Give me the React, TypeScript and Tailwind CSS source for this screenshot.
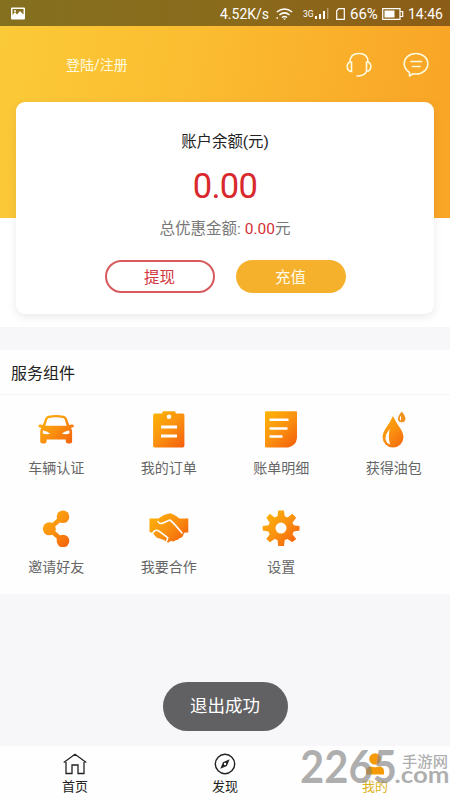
import React from "react";

const Defs = () => (
  <svg width="0" height="0" className="absolute">
    <defs>
      <linearGradient id="fire" gradientUnits="userSpaceOnUse" x1="3" y1="3" x2="35" y2="35">
        <stop offset="0" stopColor="#fdb405" />
        <stop offset="0.5" stopColor="#fa9210" />
        <stop offset="1" stopColor="#f4600c" />
      </linearGradient>
    </defs>
  </svg>
);

const G = "url(#fire)";

const Car = () => (
  <svg width="38" height="38" viewBox="0 0 38 38">
    <path
      fill={G}
      fillRule="evenodd"
      d="M11.500 5.700 Q19 4.100 26.500 5.700 Q29 6.200 29.900 8.500 L32.200 15 Q34 14.300 36.300 14.800 Q37.600 16 36.300 17.200 L34 17.800 Q35.300 20 35.100 23 V31.500 Q35 33.600 33 33.600 H31 Q29 33.600 28.800 31.500 V29.500 H9.600 V31.500 Q9.400 33.600 7.400 33.600 H5.400 Q3.200 33.600 3.200 31.500 V23 Q3 20 4.200 17.800 L2 17.200 Q.700 16 2 14.800 Q4 14.300 5.800 15 L8.300 8.500 Q9 6.200 11.500 5.700Z M12 8 Q10.700 8.300 10.200 9.700 L8.300 15.800 H29.700 L27.800 9.700 Q27.300 8.300 26 8 Q19 6.700 12 8Z M6 20.500 Q5.300 22.600 6.200 23.700 Q9 24.600 13.300 23.800 Q11 21.300 6 20.500Z M32.200 20.500 Q33 22.600 32 23.700 Q29.200 24.600 24.900 23.800 Q27 21.300 32.200 20.500Z"
    />
  </svg>
);

const Clipboard = () => (
  <svg width="38" height="38" viewBox="0 0 38 38">
    <path
      fill={G}
      fillRule="evenodd"
      d="M4.900 3.500 H12 L13 1.300 H25 L26 3.500 H32.800 Q34.400 3.500 34.400 5.300 V35.700 Q34.400 37.500 32.600 37.500 H4.900 Q3.100 37.500 3.100 35.700 V5.300 Q3.100 3.500 4.900 3.500Z M19 4.500 A2.300 2.300 0 1 0 19 9.100 A2.300 2.300 0 1 0 19 4.500Z M11 15.500 V18.400 H27 V15.500Z M11 24.500 V27.400 H27 V24.500Z"
    />
  </svg>
);

const Bill = () => (
  <svg width="38" height="38" viewBox="0 0 38 38">
    <path fill={G} d="M4.500 1.300 H34 Q35 1.300 35 2.300 V28 Q34 36 26 37.500 H4.500 Q3 37.500 3 36 V2.300 Q3 1.300 4.500 1.300Z" />
    <path stroke="white" strokeWidth="2.500" d="M7.500 9.800H26.500M7.500 18.500H25.500M7.500 26.500H20.500" />
  </svg>
);

const Drop = () => (
  <svg width="38" height="38" viewBox="0 0 38 38">
    <path fill={G} d="M18 6 Q21 12.500 26 19.500 Q28.500 23.500 28.500 27 A10.500 10.500 0 0 1 7.500 27 Q7.500 23.500 10 19.500 Q15 12.500 18 6Z" />
    <path fill="white" d="M14.700 19 Q9 26 10.800 30.500 Q12 33.700 15.200 34.700 Q12.800 27.500 14.700 19Z" />
    <path fill="#ef8f1c" d="M26.700 1.500 Q30.700 6.500 30.400 8.800 A3.700 3.500 0 0 1 23 8.800 Q22.900 6.500 26.700 1.500Z" />
    <path fill="white" d="M25.900 5.500 Q23.800 8.500 25.700 11 Q26.500 8.500 25.900 5.500Z" />
  </svg>
);

const Share = () => (
  <svg width="38" height="38" viewBox="0 0 38 38">
    <g fill={G}>
      <circle cx="26" cy="7.700" r="6.300" />
      <circle cx="12.300" cy="19.800" r="6.500" />
      <circle cx="26" cy="32" r="6.300" />
    </g>
    <path stroke={G} strokeWidth="4.600" fill="none" d="M26 7.700L12 19.800L26 32" />
  </svg>
);

const Handshake = () => (
  <svg width="40" height="38" viewBox="0 0 40 38">
    <path
      fill={G}
      d="M.500 9.500 H9.500 Q12 7.500 15 6 L21 4.200 Q24 4.500 30.500 9.500 H39.300 V23.500 H35.800 Q34 25 34 27 Q32.500 29.500 30.500 29 Q29.500 31.500 27 31 Q24.500 33.500 22 31.800 L19.300 33.800 Q17 33 15 31 L7.500 28.500 L3.700 24 L.500 23Z"
    />
    <path fill="none" stroke="white" strokeWidth="1.600" strokeLinecap="round" strokeLinejoin="round" d="M9 12.500 Q10.500 15.600 14 14 Q17.500 12.300 20.800 11 Q24 13 33 24" />
    <path fill="none" stroke="white" strokeWidth="1.600" strokeLinecap="round" d="M3.300 24.800 Q6 19.500 10 22.200 L18.700 28.700 Q18.500 31 16.500 34" />
  </svg>
);

const Gear = () => (
  <svg width="38" height="38" viewBox="0 0 38 38">
    <path
      fill={G}
      fillRule="evenodd"
      d="M16.200 1.500 H22 L22.700 7.300 L25.500 8.500 L30.300 4.800 L34.200 8.700 L30.500 13.400 L31.700 16.200 L37.500 16.900 V21.500 L31.700 22.400 L30.500 25.200 L34.200 29.900 L30.300 33.300 L25.500 29.900 L22.700 31.100 L22 36.900 H16.200 L15.500 31.100 L12.500 29.900 L8 33.300 L4.300 29.900 L7.700 25.200 L6.500 22.400 L.700 21.500 V16.900 L6.500 16.200 L7.700 13.400 L4.300 8.700 L8 4.800 L12.500 8.500 L15.500 7.300Z M19 13.600 A5.500 5.500 0 1 0 19 24.600 A5.500 5.500 0 1 0 19 13.600Z"
    />
  </svg>
);

const services = [
  { label: "车辆认证", icon: <Car /> },
  { label: "我的订单", icon: <Clipboard /> },
  { label: "账单明细", icon: <Bill /> },
  { label: "获得油包", icon: <Drop /> },
  { label: "邀请好友", icon: <Share /> },
  { label: "我要合作", icon: <Handshake /> },
  { label: "设置", icon: <Gear /> },
];

const StatusBar = () => (
  <div className="flex h-[26px] items-center justify-between bg-linear-to-r from-[#84701f] via-[#8a6b1c] to-[#8b5c17] pt-px pr-[7px] pl-[11px] text-white">
    <svg width="14" height="13" viewBox="0 0 14 13">
      <path fill="white" fillRule="evenodd" d="M1 .500H13Q14 .500 14 1.500V11.500Q14 12.500 13 12.500H1Q0 12.500 0 11.500V1.500Q0 .500 1 .500ZM1.500 2V8L4 5L6 7.500L9 4L12.500 7.500V2Z" />
      <circle cx="4" cy="4" r="1" fill="white" />
    </svg>
    <div className="flex items-center text-[14px] leading-[26px]">
      <span className="w-[48px] whitespace-nowrap text-[14px]">4.52K/s</span>
      <svg className="ml-2" width="17" height="14" viewBox="0 0 17 14" fill="none" stroke="white" strokeWidth="1.500">
        <path d="M.800 5Q8.500-1.200 16.200 5M3.400 8Q8.500 3.700 13.600 8M6 10.500Q8.500 8.500 11 10.500" />
        <path d="M7 11.500h3l-1.500 1.500z" fill="white" stroke="none" />
        <path d="M.500 11h1.500" />
      </svg>
      <span className="ml-2.5 w-[12px] text-[8.500px]">3G</span>
      <svg width="14" height="13" viewBox="0 0 14 13" fill="white">
        <path d="M0 9h2v3H0zM4 7h2v5H4zM8 4h2v8H8z" />
        <path d="M12.300 1h1v11h-1z" opacity=".55" />
      </svg>
      <svg className="ml-[7px]" width="9" height="12" viewBox="0 0 9 12" fill="none" stroke="white" strokeWidth="1.200">
        <path d="M2.800 .700H8.300V11.300H.700V2.800Z" />
      </svg>
      <span className="ml-[5px] w-[29px] whitespace-nowrap text-[15px]">66%</span>
      <svg className="ml-[3px]" width="22" height="12" viewBox="0 0 22 12">
        <path d="M.700 .700H18V11.300H.700ZM18 3.500H20.700V8.500H18" fill="none" stroke="white" strokeWidth="1.200" />
        <path d="M2.500 2.500H12.500V9.500H2.500Z" fill="white" />
      </svg>
      <span className="ml-[4px] w-[35px] whitespace-nowrap text-[14px]">14:46</span>
    </div>
  </div>
);

const Header = () => (
  <div className="flex h-[76px] items-center pt-0.5 pr-[21px] pl-[66px] text-[#fffbe0]">
    <span className="-mt-px flex-1 text-[14px] leading-5">登陆/注册</span>
    <svg width="26" height="26" viewBox="0 0 26 26" fill="none" stroke="#fffbe0" strokeWidth="1.600" strokeLinecap="round">
      <path d="M4 10Q4 1.500 13 1.500T22 10" />
      <path d="M5.500 10Q1.200 10 1.200 14.500T5.500 19.500ZM20.500 10Q24.800 10 24.800 14.500T20.500 19.500ZM20.500 19.500Q18.500 24 11 24" />
    </svg>
    <svg className="ml-[31px]" width="26" height="26" viewBox="0 0 26 26" fill="none" stroke="#fffbe0" strokeWidth="1.600" strokeLinecap="round" strokeLinejoin="round">
      <path d="M6.500 24V20.500Q1.200 17 1.200 11.800C1.200 5.500 6.500 1.500 13 1.500S24.800 6 24.800 11.800S19.500 22 13 22Q11.500 22 10 21.700Z" />
      <path d="M8 9.500H18.500M9.500 14.500H17" />
    </svg>
  </div>
);

const BalanceCard = () => (
  <div className="mx-4 flex h-[212px] flex-col items-center rounded-[9px] bg-white shadow-[0_3px_8px_rgba(60,60,90,0.11)]">
    <div className="mt-[29px] text-[15.400px] leading-[22px] text-[#222]">账户余额(元)</div>
    <div className="mt-[15px] text-[34.500px] leading-[36px] tracking-[-0.700px] text-[#d9292d]">0.00</div>
    <div className="mt-[14px] text-[15.500px] leading-[22px] whitespace-nowrap text-[#777]">
      总优惠金额: <span className="text-[#d32f35]">0.00</span>元
    </div>
    <div className="mt-[20px] flex gap-[21px] text-[15.500px]">
      <button className="h-[33px] w-[110px] rounded-full border-2 border-[#d85a5f] pt-px leading-[30px] text-[#d2383f]">提现</button>
      <button className="h-[33px] w-[110px] rounded-full bg-[#f5b02c] pt-0.5 leading-[32px] text-[#fffbe8]">充值</button>
    </div>
  </div>
);

const Watermark = () => (
  <svg className="absolute top-[730px] left-[290px]" width="160" height="70" viewBox="0 0 160 70" fill="#858585" fillOpacity="0.66">
    <text x="10" y="53" fontFamily="Lato, sans-serif" fontWeight="700" fontSize="45" textLength="97" lengthAdjust="spacingAndGlyphs">2265</text>
    <text x="112" y="36.500" fontFamily="'Noto Sans CJK SC', sans-serif" fontWeight="500" fontSize="15" textLength="46" lengthAdjust="spacingAndGlyphs">手游网</text>
    <text x="104.500" y="52.500" fontFamily="Lato, sans-serif" fontWeight="700" fontSize="23" textLength="55" lengthAdjust="spacingAndGlyphs">.com</text>
  </svg>
);

const tabs = [
  {
    label: "首页",
    color: "text-[#222]",
    icon: (
      <svg width="24" height="22" viewBox="0 0 24 22" fill="none" stroke="#222" strokeWidth="1.300">
        <path d="M.700 9.500L12 1.200L23.300 9.500M3 9V20.500H9V12H15V20.500H21V9" />
      </svg>
    ),
  },
  {
    label: "发现",
    color: "text-[#222]",
    icon: (
      <svg width="22" height="22" viewBox="0 0 22 22" fill="none" stroke="#222" strokeWidth="1.400">
        <circle cx="11" cy="11" r="9.700" />
        <path fill="#222" fillRule="evenodd" stroke="none" d="M15.700 6.300L12.800 13L6.300 15.700L9 9.200ZM11 9.800A1.200 1.200 0 1 0 11 12.200A1.200 1.200 0 1 0 11 9.800Z" />
      </svg>
    ),
  },
  {
    label: "我的",
    color: "text-[#ddb21c]",
    icon: (
      <svg width="20" height="22" viewBox="0 0 20 22" fill="#f59a05">
        <circle cx="10" cy="6" r="5.800" />
        <path d="M1 21.500V18Q1.500 13.500 6 13.500Q10 15 14 13.500Q18.700 13.500 19 18V21.500Z" />
      </svg>
    ),
  },
];

export default function App() {
  return (
    <div className="relative flex h-[800px] w-[450px] flex-col overflow-hidden bg-[#f7f7f9] font-[Roboto,'Noto_Sans_CJK_SC',sans-serif]">
      <Defs />
      <StatusBar />
      <div className="h-[301px] bg-white bg-[linear-gradient(100deg,#fbca38_0%,#fbbd31_40%,#f9a526_95%)] bg-[length:100%_192px] bg-no-repeat">
        <Header />
        <BalanceCard />
      </div>
      <section className="mt-[23px] h-[244px] bg-[#fefefe]">
        <h2 className="h-[45px] border-b border-[#f5f5f5] pl-[11px] text-[16px] leading-[48px] text-[#222]">服务组件</h2>
        <div className="grid auto-rows-[98.500px] grid-cols-4">
          {services.map((s) => (
            <div key={s.label} className="flex flex-col items-center pt-[15px] text-[14px] text-[#666]">
              {s.icon}
              <span className="mt-[9px] leading-[22px]">{s.label}</span>
            </div>
          ))}
        </div>
      </section>
      <div className="mt-auto mb-[15px] flex h-[49px] w-[125px] items-center justify-center self-center rounded-full bg-[#616163] text-[17.500px] text-white">
        退出成功
      </div>
      <nav className="grid h-[54px] grid-cols-3 bg-[#fefefe]">
        {tabs.map((t) => (
          <div key={t.label} className={"flex flex-col items-center pt-[7px] text-[13px] leading-[24px] " + t.color}>
            {t.icon}
            <span>{t.label}</span>
          </div>
        ))}
      </nav>
      <Watermark />
    </div>
  );
}
